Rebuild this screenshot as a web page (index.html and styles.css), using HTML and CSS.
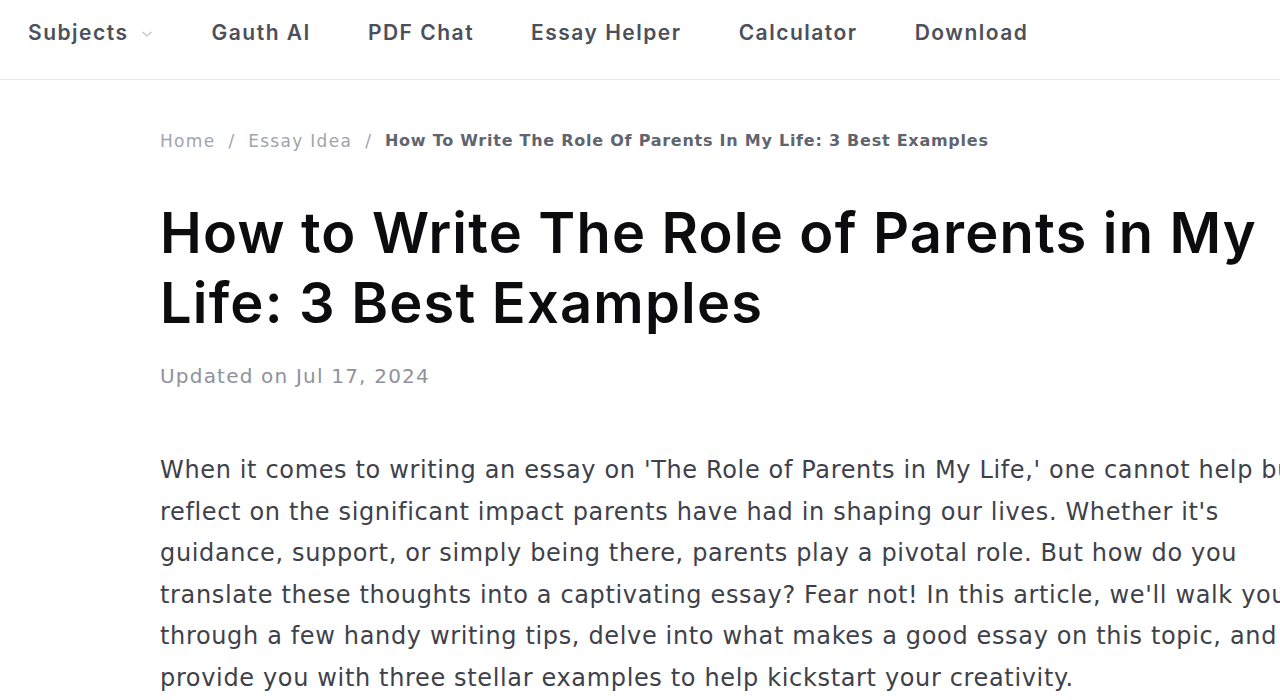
FILE: index.html
```html
<!DOCTYPE html>
<html lang="en">
<head>
<meta charset="utf-8">
<title>How to Write The Role of Parents in My Life: 3 Best Examples</title>
<link rel="stylesheet" href="styles.css">
</head>
<body>
<header class="topbar">
  <nav class="nav">
    <a class="nav-item subjects" href="#">Subjects<svg class="caret" width="12" height="8" viewBox="0 0 12 8"><path d="M1.5 2 L6 6 L10.5 2" fill="none" stroke="#c2c4ca" stroke-width="1.2"/></svg></a>
    <a class="nav-item" href="#">Gauth AI</a>
    <a class="nav-item" href="#">PDF Chat</a>
    <a class="nav-item" href="#">Essay Helper</a>
    <a class="nav-item" href="#">Calculator</a>
    <a class="nav-item" href="#">Download</a>
  </nav>
</header>
<main class="article">
  <div class="crumbs">
    <a href="#" class="crumb">Home</a><span class="sep">/</span>
    <a href="#" class="crumb">Essay Idea</a><span class="sep">/</span>
    <span class="crumb current">How To Write The Role Of Parents In My Life: 3 Best Examples</span>
  </div>
  <h1 class="title">How to Write The Role of Parents in My<br>Life: 3 Best Examples</h1>
  <div class="updated">Updated on Jul 17, 2024</div>
  <p class="intro">When it comes to writing an essay on 'The Role of Parents in My Life,' one cannot help but<br>reflect on the significant impact parents have had in shaping our lives. Whether it's<br>guidance, support, or simply being there, parents play a pivotal role. But how do you<br>translate these thoughts into a captivating essay? Fear not! In this article, we'll walk you<br>through a few handy writing tips, delve into what makes a good essay on this topic, and<br>provide you with three stellar examples to help kickstart your creativity.</p>
</main>
</body>
</html>
```
FILE: styles.css
```css
html, body {
  margin: 0;
  padding: 0;
  background: #fff;
  overflow: hidden;
  font-family: "DejaVu Sans", "Noto Sans", sans-serif;
}
a { text-decoration: none; color: inherit; }

.topbar {
  height: 79px;
  border-bottom: 1.5px solid #e7e8ed;
}
.nav {
  display: flex;
  align-items: center;
  gap: 57px;
  padding: 20px 0 0 28px;
}
.nav-item {
  font-family: "Inter", "Noto Sans", sans-serif;
  font-size: 21px;
  line-height: 26px;
  font-weight: 600;
  color: #4c505a;
  letter-spacing: 1.5px;
  display: flex;
  align-items: center;
}
.subjects { margin-right: 2px; }
.caret { margin-left: 12px; margin-top: 2px; }

.article {
  padding-left: 160px;
  width: 1400px;
}
.crumbs {
  margin-top: 49px;
  font-size: 17px;
  line-height: 24px;
  color: #a1a4ac;
  display: flex;
  align-items: center;
  letter-spacing: 1.3px;
  white-space: nowrap;
}
.sep { margin: 0 14px 0 13px; color: #a1a4ac; letter-spacing: 0; }
.current {
  font-size: 16px;
  font-weight: 700;
  color: #60646e;
  letter-spacing: 0.75px;
}

.title {
  margin: 45px 0 0;
  font-family: "Inter", "Noto Sans", sans-serif;
  font-size: 56px;
  line-height: 70px;
  font-weight: 600;
  color: #0c0c0e;
  letter-spacing: 1.2px;
  white-space: nowrap;
}
.updated {
  margin-top: 26px;
  font-size: 20px;
  line-height: 24px;
  color: #8e929b;
  letter-spacing: 1.2px;
}
.intro {
  margin: 62px 0 0;
  font-size: 24px;
  line-height: 41.6px;
  color: #3e414a;
  white-space: nowrap;
  letter-spacing: 0.65px;
}
```
